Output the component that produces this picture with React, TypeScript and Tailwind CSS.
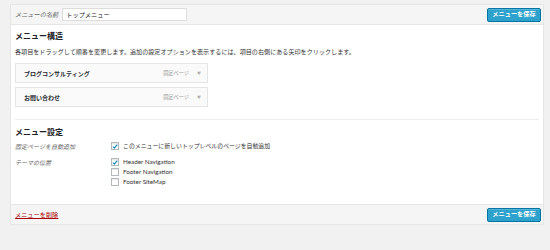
const jp = { fontFamily: '"Noto Sans CJK JP", "Noto Sans", sans-serif' };

const Check = ({ on }: { on?: boolean }) => (
  <span className="flex h-[8px] w-[8px] shrink-0 items-center justify-center border border-[#b4b9be] bg-white shadow-[inset_0_1px_1px_rgba(0,0,0,0.1)]">
    {on && (
      <svg width="7" height="7" viewBox="0 0 8 8">
        <path d="M1.2 4.2 L3.2 6.2 L7 1.4" fill="none" stroke="#1e8cbe" strokeWidth="1.6" />
      </svg>
    )}
  </span>
);

const SaveButton = () => (
  <button className="flex h-[14px] w-[54px] items-center justify-center whitespace-nowrap rounded-[2px] border border-[#0074a2] bg-[#2ea2cc] text-[6.2px] font-bold leading-none text-white shadow-[inset_0_1px_0_rgba(120,200,230,0.5)]">
    メニューを保存
  </button>
);

const MenuItem = ({ title }: { title: string }) => (
  <div className="flex h-[20px] w-[193px] items-center justify-between border border-[#e5e5e5] bg-[#fafafa] pl-[8px] pr-[6px]">
    <span className="text-[6px] font-bold text-[#23282d]">{title}</span>
    <span className="flex items-center gap-[8px] text-[5.2px] text-[#999]">
      固定ページ
      <span className="text-[4px] text-[#aaa]">▼</span>
    </span>
  </div>
);

export default function App() {
  return (
    <div className="h-[250px] w-[550px] bg-[#f1f1f1] pt-[4px] pl-[10px]" style={jp}>
      <div className="w-[534px] border border-[#e5e5e5] bg-white">
        <div className="flex h-[20px] items-center justify-between border-b border-[#e5e5e5] bg-[#f5f5f5] pl-[4px] pr-[2px]">
          <div className="flex items-center gap-[4px]">
            <span className="text-[6.2px] italic text-[#666]">メニューの名前</span>
            <div className="flex h-[13px] w-[125px] items-center border border-[#ddd] bg-white px-[3px] text-[6.2px] text-[#222]">
              トップメニュー
            </div>
          </div>
          <SaveButton />
        </div>

        <div className="h-[179px] px-[4px] pt-[5px]">
          <div className="text-[8px] font-bold leading-[12px] text-[#1d2227]">メニュー構造</div>
          <div className="mt-[5px] text-[6.1px] leading-[9px] text-[#333]">
            各項目をドラッグして順番を変更します。追加の設定オプションを表示するには、項目の右側にある矢印をクリックします。
          </div>
          <div className="mt-[7px] flex flex-col gap-[4px]">
            <MenuItem title="ブログコンサルティング" />
            <MenuItem title="お問い合わせ" />
          </div>
          <div className="mt-[12px] border-t border-[#eee]" />
          <div className="mt-[6px] text-[8px] font-bold leading-[12px] text-[#1d2227]">メニュー設定</div>
          <div className="mt-[3px] flex h-[11px] items-center">
            <span className="w-[96px] text-[6px] italic text-[#666]">固定ページを自動追加</span>
            <div className="flex items-center gap-[4px]">
              <Check on />
              <span className="text-[5.9px] text-[#333]">このメニューに新しいトップレベルのページを自動追加</span>
            </div>
          </div>
          <div className="mt-[5px] flex items-start">
            <span className="flex h-[10px] w-[96px] items-center text-[6px] italic text-[#666]">テーマの位置</span>
            <div className="flex flex-col" style={{ fontFamily: 'Lato, "Noto Sans", sans-serif' }}>
              {[
                ["Header Navigation", true],
                ["Footer Navigation", false],
                ["Footer SiteMap", false],
              ].map(([label, on]) => (
                <div key={label as string} className="flex h-[10px] items-center gap-[4px]">
                  <Check on={on as boolean} />
                  <span className="text-[6.3px] text-[#333]">{label}</span>
                </div>
              ))}
            </div>
          </div>
        </div>

        <div className="flex h-[20px] items-center justify-between border-t border-[#e5e5e5] bg-[#f5f5f5] pl-[4px] pr-[2px]">
          <a className="text-[6.2px] text-[#a00] underline">メニューを削除</a>
          <SaveButton />
        </div>
      </div>
    </div>
  );
}
